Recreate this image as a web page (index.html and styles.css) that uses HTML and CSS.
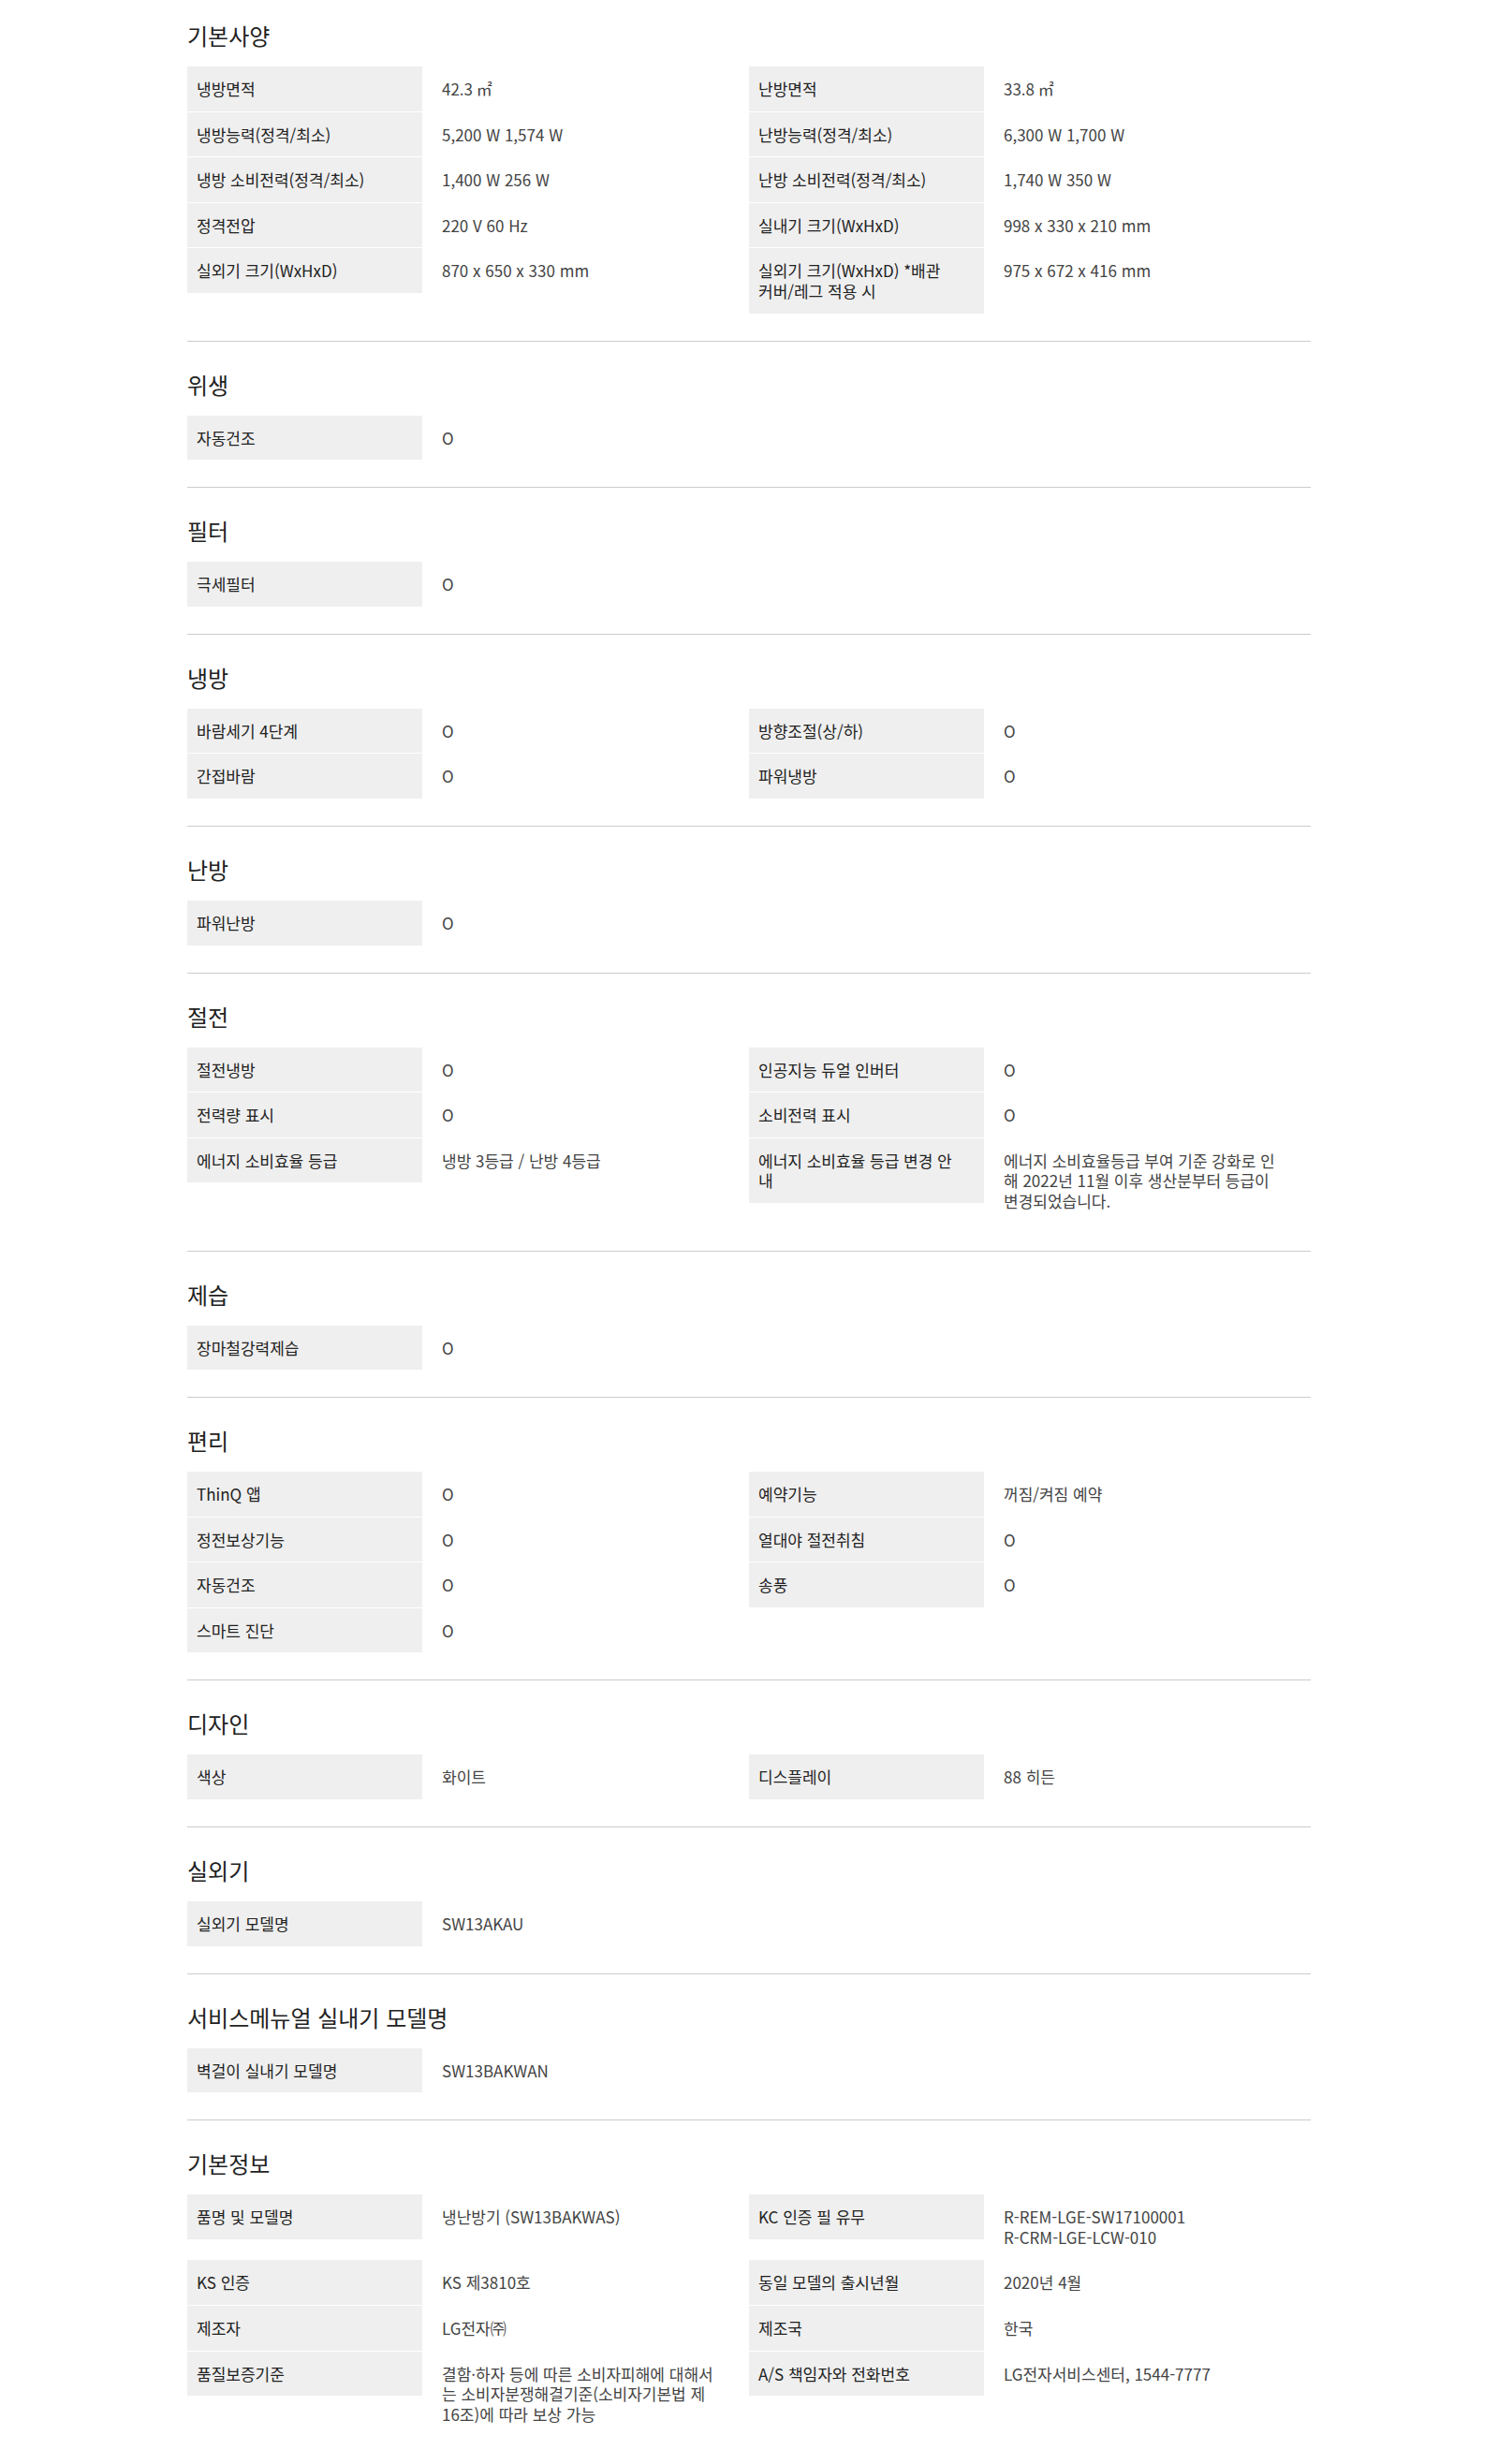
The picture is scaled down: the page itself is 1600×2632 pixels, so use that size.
FILE: index.html
```html
<!DOCTYPE html>
<html lang="ko">
<head>
    <meta charset="UTF-8">
    <meta name="viewport" content="width=device-width, initial-scale=1.0">
    <title>제품 사양</title>
    <link rel="stylesheet" href="styles.css">
</head>
<body>
    <!-- Spec sheet -->
    <div class="spec">

        <div class="section first">
            <h3>기본사양</h3>
            <div class="grid">
                <div class="item"><div class="label">냉방면적</div><div class="value">42.3 ㎡</div></div>
                <div class="item"><div class="label">난방면적</div><div class="value">33.8 ㎡</div></div>
                <div class="item"><div class="label">냉방능력(정격/최소)</div><div class="value">5,200 W 1,574 W</div></div>
                <div class="item"><div class="label">난방능력(정격/최소)</div><div class="value">6,300 W 1,700 W</div></div>
                <div class="item"><div class="label">냉방 소비전력(정격/최소)</div><div class="value">1,400 W 256 W</div></div>
                <div class="item"><div class="label">난방 소비전력(정격/최소)</div><div class="value">1,740 W 350 W</div></div>
                <div class="item"><div class="label">정격전압</div><div class="value">220 V 60 Hz</div></div>
                <div class="item"><div class="label">실내기 크기(WxHxD)</div><div class="value">998 x 330 x 210 mm</div></div>
                <div class="item"><div class="label">실외기 크기(WxHxD)</div><div class="value">870 x 650 x 330 mm</div></div>
                <div class="item"><div class="label">실외기 크기(WxHxD) *배관<br>커버/레그 적용 시</div><div class="value">975 x 672 x 416 mm</div></div>
            </div>
        </div>

        <div class="section">
            <h3>위생</h3>
            <div class="grid">
                <div class="item"><div class="label">자동건조</div><div class="value">O</div></div>
            </div>
        </div>

        <div class="section">
            <h3>필터</h3>
            <div class="grid">
                <div class="item"><div class="label">극세필터</div><div class="value">O</div></div>
            </div>
        </div>

        <div class="section">
            <h3>냉방</h3>
            <div class="grid">
                <div class="item"><div class="label">바람세기 4단계</div><div class="value">O</div></div>
                <div class="item"><div class="label">방향조절(상/하)</div><div class="value">O</div></div>
                <div class="item"><div class="label">간접바람</div><div class="value">O</div></div>
                <div class="item"><div class="label">파워냉방</div><div class="value">O</div></div>
            </div>
        </div>

        <div class="section">
            <h3>난방</h3>
            <div class="grid">
                <div class="item"><div class="label">파워난방</div><div class="value">O</div></div>
            </div>
        </div>

        <div class="section">
            <h3>절전</h3>
            <div class="grid">
                <div class="item"><div class="label">절전냉방</div><div class="value">O</div></div>
                <div class="item"><div class="label">인공지능 듀얼 인버터</div><div class="value">O</div></div>
                <div class="item"><div class="label">전력량 표시</div><div class="value">O</div></div>
                <div class="item"><div class="label">소비전력 표시</div><div class="value">O</div></div>
                <div class="item"><div class="label">에너지 소비효율 등급</div><div class="value">냉방 3등급 / 난방 4등급</div></div>
                <div class="item"><div class="label">에너지 소비효율 등급 변경 안<br>내</div><div class="value">에너지 소비효율등급 부여 기준 강화로 인<br>해 2022년 11월 이후 생산분부터 등급이<br>변경되었습니다.</div></div>
            </div>
        </div>

        <div class="section">
            <h3>제습</h3>
            <div class="grid">
                <div class="item"><div class="label">장마철강력제습</div><div class="value">O</div></div>
            </div>
        </div>

        <div class="section">
            <h3>편리</h3>
            <div class="grid">
                <div class="item"><div class="label">ThinQ 앱</div><div class="value">O</div></div>
                <div class="item"><div class="label">예약기능</div><div class="value">꺼짐/켜짐 예약</div></div>
                <div class="item"><div class="label">정전보상기능</div><div class="value">O</div></div>
                <div class="item"><div class="label">열대야 절전취침</div><div class="value">O</div></div>
                <div class="item"><div class="label">자동건조</div><div class="value">O</div></div>
                <div class="item"><div class="label">송풍</div><div class="value">O</div></div>
                <div class="item"><div class="label">스마트 진단</div><div class="value">O</div></div>
            </div>
        </div>

        <div class="section">
            <h3>디자인</h3>
            <div class="grid">
                <div class="item"><div class="label">색상</div><div class="value">화이트</div></div>
                <div class="item"><div class="label">디스플레이</div><div class="value">88 히든</div></div>
            </div>
        </div>

        <div class="section">
            <h3>실외기</h3>
            <div class="grid">
                <div class="item"><div class="label">실외기 모델명</div><div class="value">SW13AKAU</div></div>
            </div>
        </div>

        <div class="section">
            <h3>서비스메뉴얼 실내기 모델명</h3>
            <div class="grid">
                <div class="item"><div class="label">벽걸이 실내기 모델명</div><div class="value">SW13BAKWAN</div></div>
            </div>
        </div>

        <div class="section last">
            <h3>기본정보</h3>
            <div class="grid">
                <div class="item"><div class="label">품명 및 모델명</div><div class="value">냉난방기 (SW13BAKWAS)</div></div>
                <div class="item"><div class="label">KC 인증 필 유무</div><div class="value">R-REM-LGE-SW17100001<br>R-CRM-LGE-LCW-010</div></div>
                <div class="item"><div class="label">KS 인증</div><div class="value">KS 제3810호</div></div>
                <div class="item"><div class="label">동일 모델의 출시년월</div><div class="value">2020년 4월</div></div>
                <div class="item"><div class="label">제조자</div><div class="value">LG전자㈜</div></div>
                <div class="item"><div class="label">제조국</div><div class="value">한국</div></div>
                <div class="item"><div class="label">품질보증기준</div><div class="value">결함·하자 등에 따른 소비자피해에 대해서<br>는 소비자분쟁해결기준(소비자기본법 제<br>16조)에 따라 보상 가능</div></div>
                <div class="item"><div class="label">A/S 책임자와 전화번호</div><div class="value">LG전자서비스센터, 1544-7777</div></div>
            </div>
        </div>

    </div>
</body>
</html>
```

FILE: styles.css
```css
/* General body styling */
body {
    font-family: "Noto Sans CJK KR", "Noto Sans", sans-serif;
    margin: 0;
    padding: 0;
    background: #ffffff;
    color: #333;
}

/* Spec container */
.spec {
    width: 1200px;
    margin: 0 0 0 200px;
}

/* Sections */
.section {
    border-top: 1px solid #cccccc;
    padding: 29px 0 29px;
}

.section.first {
    border-top: none;
    padding-top: 21px;
}

.section h3 {
    margin: 0 0 16px;
    font-size: 24px;
    line-height: 34px;
    font-weight: normal;
    color: #222;
}

/* Two column list */
.grid {
    display: grid;
    grid-template-columns: 1fr 1fr;
    row-gap: 1px;
    align-items: start;
}

.item {
    display: flex;
    align-items: flex-start;
}

.label {
    flex: 0 0 251px;
    box-sizing: border-box;
    padding: 13px 10px;
    background: #efefef;
    font-size: 17px;
    line-height: 21.6px;
    color: #222;
}

.value {
    flex: 1;
    padding: 13px 10px 13px 21px;
    font-size: 17px;
    line-height: 21.6px;
    color: #444;
}
```
